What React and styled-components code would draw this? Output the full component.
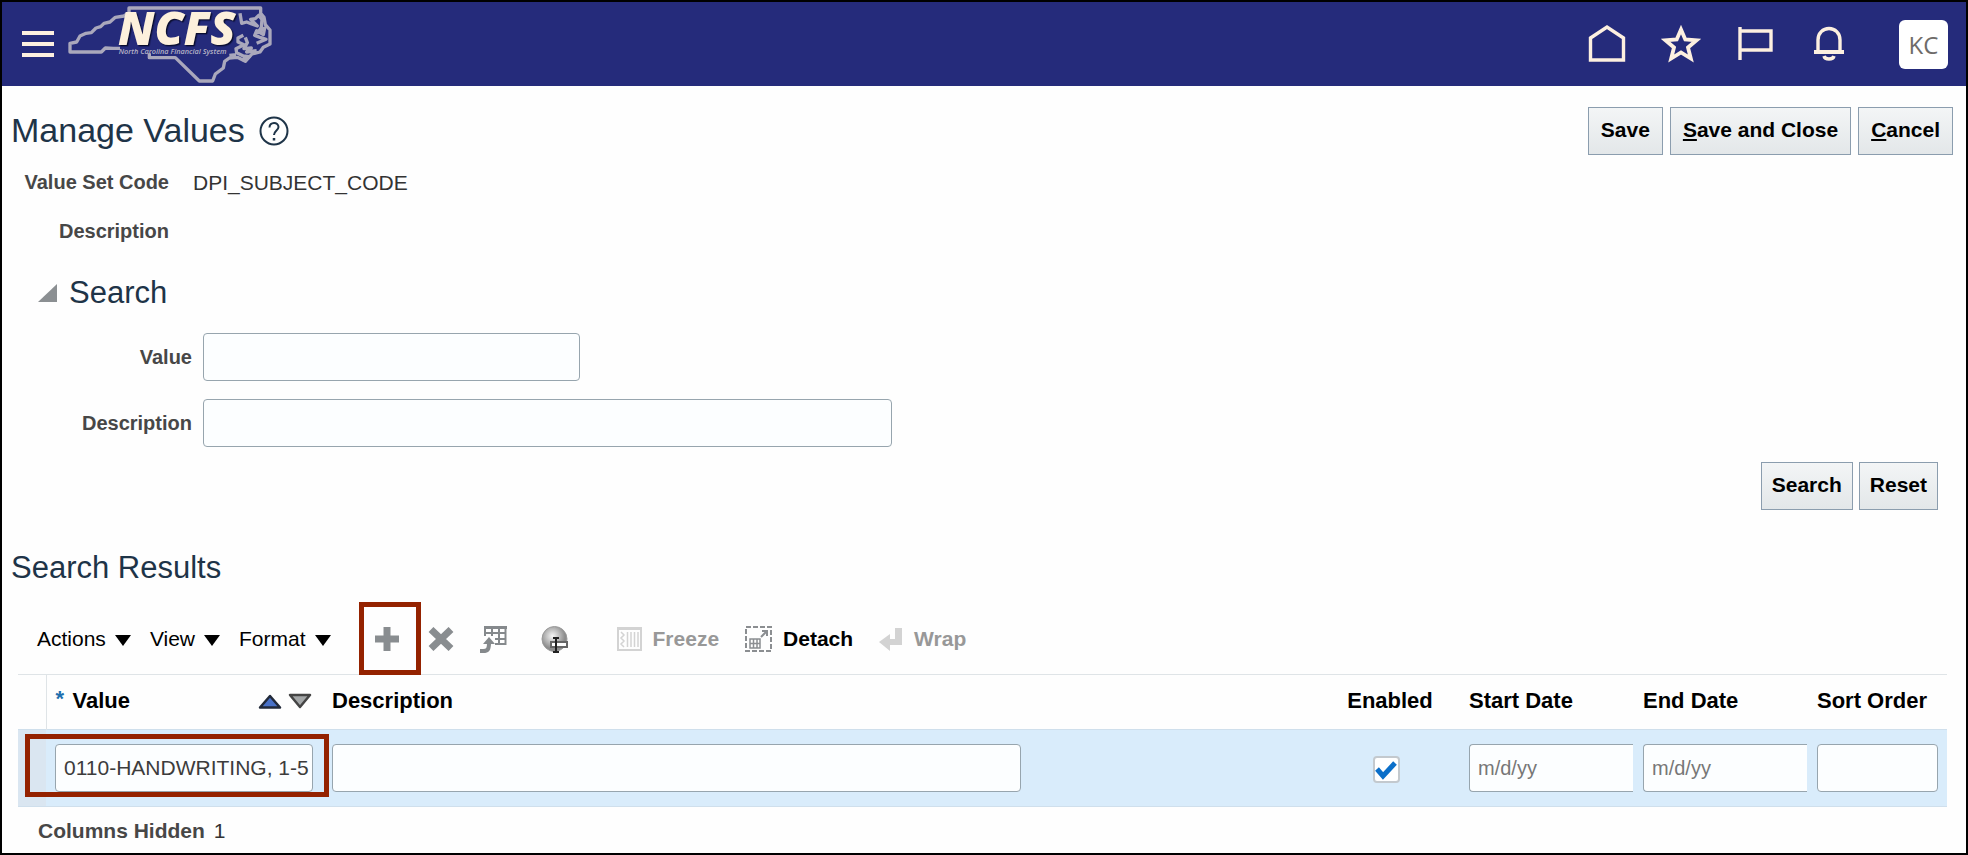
import React, { useState } from "react";
import styled, { createGlobalStyle, css } from "styled-components";

const GlobalStyle = createGlobalStyle`
  *, *::before, *::after { box-sizing: border-box; }
  body { margin: 0; background: #fefefe; }
  body, button, input { font-family: "Liberation Sans", Arial, sans-serif; font-size: 21px; }
`;

const Page = styled.div`
  min-height: 100vh;
  border: 2px solid #000;
  background: #fefefe;
  color: #000;
  line-height: 24px;
`;

const TopBar = styled.header`
  display: flex;
  align-items: center;
  height: 84px;
  padding: 0 18px 0 20px;
  background: #252b7b;
  color: #fdf0e0;
`;

const BareButton = styled.button`
  display: flex;
  align-items: center;
  gap: 9px;
  padding: 0;
  border: 0;
  background: none;
  color: inherit;
  cursor: pointer;
`;

const LogoLink = styled.a`
  display: block;
  margin-left: 14px;
  height: 80px;
`;

const LogoDrawing = styled.svg`
  display: block;
  overflow: visible;
`;

const LogoLetters = styled.text`
  font: italic 800 139px "Open Sans", sans-serif;
  fill: #fdf0dc;
  filter: drop-shadow(4px 4px 2px #0a0d30);
`;

const LogoCaption = styled.text`
  font: italic 600 22px "Open Sans", sans-serif;
  fill: #b5b3c6;
`;

const GlobalNav = styled.nav`
  display: flex;
  align-items: center;
  gap: 34px;
  margin-left: auto;
`;

const Avatar = styled.button`
  width: 49px;
  height: 49px;
  margin-left: 16px;
  padding: 0;
  border: 0;
  border-radius: 6px;
  background: #fff;
  color: #6e6b69;
  font-family: "Open Sans", sans-serif;
  font-size: 24px;
`;

const TitleRow = styled.div`
  display: flex;
  align-items: center;
  gap: 7px;
  padding: 21px 13px 0 9px;
`;

const PageTitle = styled.h1`
  margin: 0 7px 3px 0;
  font-size: 34px;
  font-weight: 400;
  line-height: 40px;
  color: #1e3448;
`;

const HelpButton = styled(BareButton)`
  margin-right: auto;
  color: #1e3448;
`;

const PushButton = styled.button`
  height: 48px;
  padding: 0 ${(p) => (p.$compact ? 10 : 12)}px 2px;
  border: 1px solid #8b9dae;
  background: linear-gradient(#f3f5f6, #e3e7e9);
  color: #000;
  font-weight: 700;
`;

const Facts = styled.dl`
  display: grid;
  grid-template-columns: 149px 1fr;
  column-gap: 24px;
  margin: 3px 0 0 18px;
  line-height: 49px;
`;

const FactName = styled.dt`
  font-size: 20px;
  font-weight: 700;
  text-align: right;
  white-space: nowrap;
  color: #474747;
`;

const FactValue = styled.dd`
  margin: 0;
  color: #333;
`;

const SearchForm = styled.form`
  padding: 17px 28px 0 36px;
`;

const SectionTitle = styled.h2`
  margin: 0;
  font-size: 31px;
  font-weight: 400;
  line-height: 40px;
  color: #1e3448;
`;

const Disclosure = styled(BareButton)`
  gap: 12px;
  font-size: inherit;
  line-height: inherit;
`;

const Fields = styled.div`
  display: grid;
  grid-template-columns: 154px 1fr;
  column-gap: 11px;
  row-gap: 18px;
  align-items: center;
  margin-top: 20px;
`;

const FieldLabel = styled.label`
  font-size: 20px;
  font-weight: 700;
  text-align: right;
  color: #474747;
`;

const TextField = styled.input`
  display: block;
  width: 100%;
  max-width: ${(p) => p.$max || "none"};
  height: 48px;
  padding: 0 0 0 8px;
  border: 1px solid #97a5ae;
  border-radius: 4px;
  background: #fcfeff;
  color: #3c3c3c;
  &::placeholder { color: #777; opacity: 1; font-size: 20px; }
  ${(p) => p.$open && css`
    border-right: 0;
    border-radius: 4px 0 0 4px;
  `}
`;

const FormActions = styled.div`
  display: flex;
  justify-content: flex-end;
  gap: 6px;
  margin-top: 15px;
`;

const Results = styled.section`
  padding: 38px 19px 0 16px;
`;

const ResultsTitle = styled(SectionTitle)`
  margin-left: -7px;
`;

const Toolbar = styled.div`
  display: flex;
  align-items: center;
  height: 73px;
  margin: 14px 0 -1px;
  padding-left: 19px;
`;

const Menus = styled.div`
  display: flex;
  gap: 19px;
  margin-right: 28px;
`;

const CaretIcon = styled.svg`
  margin-top: 4px;
`;

const Marked = styled.div`
  display: flex;
  align-items: center;
  width: 62px;
  height: 73px;
  margin-right: 7px;
  padding-left: 11px;
  border: 5px solid #942200;
`;

const ToolGroup = styled.div`
  display: flex;
  align-items: center;
  gap: 26px;
  margin-right: ${(p) => p.$after || 0}px;
`;

const Tool = styled(BareButton)`
  gap: 11px;
  font-weight: 700;
  color: ${(p) => (p.disabled ? "#989898" : "#000")};
`;

const Grid = styled.table`
  width: 100%;
  table-layout: fixed;
  border-collapse: collapse;
  border-top: 1px solid #dfe4e7;
`;

const Col = styled.col`
  width: ${(p) => p.$w || "auto"};
`;

const HeadCell = styled.th`
  height: 55px;
  padding: 0 9px 2px;
  text-align: ${(p) => p.$align || "left"};
  font-size: 22px;
  font-weight: 700;
  white-space: nowrap;
  border-left: ${(p) => (p.$ruled ? "1px solid #dfe4e7" : "0")};
`;

const HeadLine = styled.div`
  display: flex;
  align-items: center;
  gap: 6px;
  padding-right: 2px;
`;

const Required = styled.span`
  align-self: flex-start;
  width: 12px;
  margin-right: -1px;
  color: #1f6fae;
  line-height: 20px;
`;

const SortIcons = styled.span`
  display: flex;
  gap: 6px;
  margin-left: auto;
`;

const Row = styled.tr`
  background: #d9ecfb;
  border-top: 1px solid #cfdfec;
  border-bottom: 1px solid #cfdfec;
`;

const Cell = styled.td`
  position: relative;
  height: 77px;
  padding: 0 9px 1px;
  background: ${(p) => (p.$handle ? "#dae6f1" : "transparent")};
`;

const DateCell = styled(Cell)`
  padding-right: 1px;
`;

const CheckCell = styled(Cell)`
  padding: 3px 17px 0 9px;
`;

const RowMark = styled.div`
  position: absolute;
  inset: 4px -6px 9px -21px;
  border: 5px solid #942200;
  pointer-events: none;
`;

const Check = styled.input`
  appearance: none;
  display: block;
  width: 27px;
  height: 27px;
  margin: 0 auto;
  border: 2px solid #c3c9ce;
  border-radius: 4px;
  background: #fff;
  &:checked {
    background: #fff url("data:image/svg+xml,%3Csvg xmlns='http://www.w3.org/2000/svg' viewBox='0 0 22 22'%3E%3Cpath d='M2 10l6 7L20 4' fill='none' stroke='%230b6fc9' stroke-width='5'/%3E%3C/svg%3E") center / 22px no-repeat;
  }
`;

const Status = styled.p`
  margin: 12px 0 0;
  padding-left: 20px;
  color: #333;
  b { margin-right: 3px; color: #474747; }
`;

const Logo = () => (
  <LogoDrawing width="204" height="80" viewBox="24 12 612 240" role="img" aria-label="NCFS North Carolina Financial System">
    <g fill="none" stroke="#aaa8bc" strokeWidth="10" strokeLinejoin="round">
      <path d="M180 145H160L136 144 124 156H30V130L50 126 60 108 78 100 94 98 108 84 122 80 132 70 150 66 166 52 192 48 207 38V24H602V40L612 52 616 74 630 90V132L610 142 600 156 576 162 556 184 532 172 508 174 494 184 490 204 466 222 458 243H418L346 173H268V160" />
      <path d="M540 40L545 70 560 66 575 72 592 78 572 58 586 56 596 46 606 58 604 82 594 98 614 84 610 104 590 92 584 106 600 112 618 118 590 130M550 106L534 114 534 126 552 134 528 146 530 158 550 168 568 170 546 180M556 112L562 128 552 146 574 144 560 156 590 152M528 164L508 166" />
    </g>
    <LogoLetters x="174" y="136">NCFS</LogoLetters>
    <LogoCaption x="176" y="163">North Carolina Financial System</LogoCaption>
  </LogoDrawing>
);

const NavIcon = ({ children }) => (
  <svg width="40" height="40" viewBox="0 0 40 40" fill="none" stroke="currentColor" strokeWidth="3.4" aria-hidden="true">
    {children}
  </svg>
);

const Caret = () => (
  <CaretIcon width="16" height="11" viewBox="0 0 16 11" aria-hidden="true">
    <path d="M0 0H16L8 11z" fill="#000" />
  </CaretIcon>
);

const navItems = [
  ["Home", <path key="i" d="M3.500 14L20 3 36.500 14V36H3.500z" />],
  ["Favorites", <path key="i" d="M20 5.500L24.300 15.500 35.500 16.300 27 23.500 29.800 34.500 20 28.500 10.200 34.500 13 23.500 4.500 16.300 15.700 15.500z" strokeWidth="3.800" />],
  ["Watchlist", <path key="i" d="M5 3V36M5 7H36V26H5" />],
  ["Notifications", <g key="i"><path d="M9 27V16C9 9 14 4.500 20 4.500S31 9 31 16V27" /><path d="M5 28H35" strokeWidth="4" /><path d="M15 32C16 36 24 36 25 32" /></g>],
];

export default function App() {
  const [enabled, setEnabled] = useState(true);
  const [value, setValue] = useState("0110-HANDWRITING, 1-5");
  return (
    <>
      <GlobalStyle />
      <Page>
        <TopBar>
          <BareButton aria-label="Navigator">
            <svg width="32" height="26" viewBox="0 0 32 26" fill="currentColor">
              <path d="M0 0H32V4H0zM0 11H32V15H0zM0 22H32V26H0z" />
            </svg>
          </BareButton>
          <LogoLink href="#home"><Logo /></LogoLink>
          <GlobalNav>
            {navItems.map(([name, shape]) => (
              <BareButton key={name} aria-label={name}><NavIcon>{shape}</NavIcon></BareButton>
            ))}
            <Avatar>KC</Avatar>
          </GlobalNav>
        </TopBar>

        <main>
          <TitleRow>
            <PageTitle>Manage Values</PageTitle>
            <HelpButton aria-label="Help">
              <svg width="30" height="30" viewBox="0 0 30 30" fill="none" stroke="currentColor" strokeWidth="2">
                <circle cx="15" cy="15" r="13.500" />
                <path d="M10.500 11.500C10.500 5.500 19.500 5.500 19.500 11C19.500 14.500 15 14.500 15 19" />
                <path d="M15 22V24.500" strokeWidth="2.500" />
              </svg>
            </HelpButton>
            <PushButton>Save</PushButton>
            <PushButton accessKey="s"><u>S</u>ave and Close</PushButton>
            <PushButton accessKey="c"><u>C</u>ancel</PushButton>
          </TitleRow>

          <Facts>
            <FactName>Value Set Code</FactName>
            <FactValue>DPI_SUBJECT_CODE</FactValue>
            <FactName>Description</FactName>
            <FactValue />
          </Facts>

          <SearchForm onSubmit={(e) => e.preventDefault()}>
            <SectionTitle>
              <Disclosure type="button" aria-expanded="true">
                <svg width="19" height="18" viewBox="0 0 19 18" aria-hidden="true"><path d="M19 0V18H0z" fill="#8b8f92" /></svg>
                Search
              </Disclosure>
            </SectionTitle>
            <Fields>
              <FieldLabel htmlFor="q-value">Value</FieldLabel>
              <TextField id="q-value" $max="377px" />
              <FieldLabel htmlFor="q-desc">Description</FieldLabel>
              <TextField id="q-desc" $max="689px" />
            </Fields>
            <FormActions>
              <PushButton $compact type="submit">Search</PushButton>
              <PushButton $compact type="reset">Reset</PushButton>
            </FormActions>
          </SearchForm>

          <Results>
            <ResultsTitle>Search Results</ResultsTitle>
            <Toolbar>
              <Menus>
                {["Actions", "View", "Format"].map((m) => (
                  <BareButton key={m}>{m}<Caret /></BareButton>
                ))}
              </Menus>
              <Marked>
                <BareButton aria-label="Add row">
                  <svg width="24" height="24" viewBox="0 0 24 24"><path d="M8.500 0H15.500V8.500H24V15.500H15.500V24H8.500V15.500H0V8.500H8.500z" fill="#898d90" /></svg>
                </BareButton>
              </Marked>
              <ToolGroup $after={33}>
                <BareButton aria-label="Delete row">
                  <svg width="26" height="24" viewBox="0 0 26 24"><path d="M3 2.500L23 21.500M23 2.500L3 21.500" stroke="#898d90" strokeWidth="7" /></svg>
                </BareButton>
                <BareButton aria-label="Export to spreadsheet">
                  <svg width="28" height="28" viewBox="0 0 28 28" fill="none" stroke="#85898c">
                    <path d="M4 2.500H27" strokeWidth="3" />
                    <path d="M4 8H26M15 14H26M15 19H26M5 2V11M12 2V11M19 2V20M25.500 1V20" strokeWidth="2" />
                    <path d="M0 26H3C8 26 9 24 9 18" strokeWidth="4" />
                    <path d="M3 19L9 12 15 19z" fill="#85898c" stroke="none" />
                  </svg>
                </BareButton>
              </ToolGroup>
              <ToolGroup $after={48}>
                <BareButton aria-label="Translations">
                  <svg width="28" height="28" viewBox="0 0 28 28">
                    <defs>
                      <radialGradient id="globe" cx="42%" cy="38%"><stop offset="0" stopColor="#f6f6f6" /><stop offset="1" stopColor="#8c8c8c" /></radialGradient>
                    </defs>
                    <circle cx="13.500" cy="14" r="12.500" fill="url(#globe)" stroke="#9a9a9a" />
                    <path d="M10 17H26V22H10z" fill="#fff" stroke="#666" strokeWidth="2" />
                    <path d="M12 13H18M12 27H18M15 13V27" stroke="#222" strokeWidth="2" />
                  </svg>
                </BareButton>
              </ToolGroup>
              <ToolGroup>
                <Tool disabled>
                  <svg width="25" height="24" viewBox="0 0 25 24" fill="none" stroke="#d3d3d3" strokeWidth="2" aria-hidden="true">
                    <path d="M1 1H24V23H1zM1 2H24" />
                    <path d="M10.500 5V20M14 5V20M17.500 5V20M21 5V20M4 5L7 8 4 11 7 14 4 17 7 20" strokeWidth="1.500" />
                  </svg>
                  Freeze
                </Tool>
                <Tool>
                  <svg width="27" height="26" viewBox="0 0 27 26" fill="none" stroke="#8b8e91" aria-hidden="true">
                    <path d="M1 1H26V25H1z" strokeWidth="2" strokeDasharray="5 2" />
                    <path d="M5 13H15V22H5zM5 17.500H15M8.500 13V22M12 13V22" strokeWidth="1.500" />
                    <path d="M16 11L22 5M17 5H22V10" strokeWidth="2" />
                  </svg>
                  Detach
                </Tool>
                <Tool disabled>
                  <svg width="24" height="24" viewBox="0 0 24 24" fill="#d3d3d3" aria-hidden="true"><path d="M16 1H23V18H11V24L0 15 11 7V12H16z" /></svg>
                  Wrap
                </Tool>
              </ToolGroup>
            </Toolbar>

            <Grid>
              <colgroup>
                <Col $w="28px" /><Col $w="277px" /><Col /><Col $w="140px" /><Col $w="174px" /><Col $w="174px" /><Col $w="139px" />
              </colgroup>
              <thead>
                <tr>
                  <HeadCell aria-label="Row" />
                  <HeadCell $ruled>
                    <HeadLine>
                      <Required>*</Required>
                      Value
                      <SortIcons>
                        <svg width="24" height="17" viewBox="0 0 24 17" aria-label="Sort ascending"><path d="M2 14.500L12 3 22 14.500z" fill="#4a72c8" stroke="#222a3a" strokeWidth="2.500" strokeLinejoin="round" /></svg>
                        <svg width="24" height="17" viewBox="0 0 24 17" aria-label="Sort descending"><path d="M2 2H22L12 14z" fill="#a4a7a8" stroke="#444" strokeWidth="2.500" strokeLinejoin="round" /></svg>
                      </SortIcons>
                    </HeadLine>
                  </HeadCell>
                  <HeadCell>Description</HeadCell>
                  <HeadCell $align="center">Enabled</HeadCell>
                  <HeadCell>Start Date</HeadCell>
                  <HeadCell>End Date</HeadCell>
                  <HeadCell>Sort Order</HeadCell>
                </tr>
              </thead>
              <tbody>
                <Row>
                  <Cell $handle />
                  <Cell>
                    <TextField $max="258px" aria-label="Value" value={value} onChange={(e) => setValue(e.target.value)} />
                    <RowMark />
                  </Cell>
                  <Cell><TextField $max="689px" aria-label="Description" /></Cell>
                  <CheckCell><Check type="checkbox" aria-label="Enabled" checked={enabled} onChange={(e) => setEnabled(e.target.checked)} /></CheckCell>
                  <DateCell><TextField $open $max="164px" aria-label="Start Date" placeholder="m/d/yy" /></DateCell>
                  <DateCell><TextField $open $max="164px" aria-label="End Date" placeholder="m/d/yy" /></DateCell>
                  <Cell><TextField aria-label="Sort Order" /></Cell>
                </Row>
              </tbody>
            </Grid>
            <Status><b>Columns Hidden</b> 1</Status>
          </Results>
        </main>
      </Page>
    </>
  );
}
